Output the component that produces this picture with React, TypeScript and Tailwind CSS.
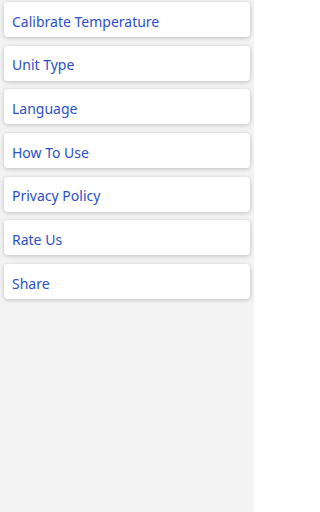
export default function App() {
  const items = ["Calibrate Temperature", "Unit Type", "Language", "How To Use", "Privacy Policy", "Rate Us", "Share"];
  return (
    <div className="w-[254px] h-[512px] bg-[#f3f3f3] px-[4px] pt-[2px] flex flex-col gap-[8.7px]" style={{ fontFamily: '"Noto Sans", sans-serif' }}>
      {items.map((t) => (
        <div key={t} className="h-[35px] bg-white rounded-[4px] shadow-[0_1px_4px_rgba(0,0,0,0.22)] flex items-center pl-[8px] pt-[3px] text-[14px] text-[#2a4fcb]">
          {t}
        </div>
      ))}
    </div>
  );
}
